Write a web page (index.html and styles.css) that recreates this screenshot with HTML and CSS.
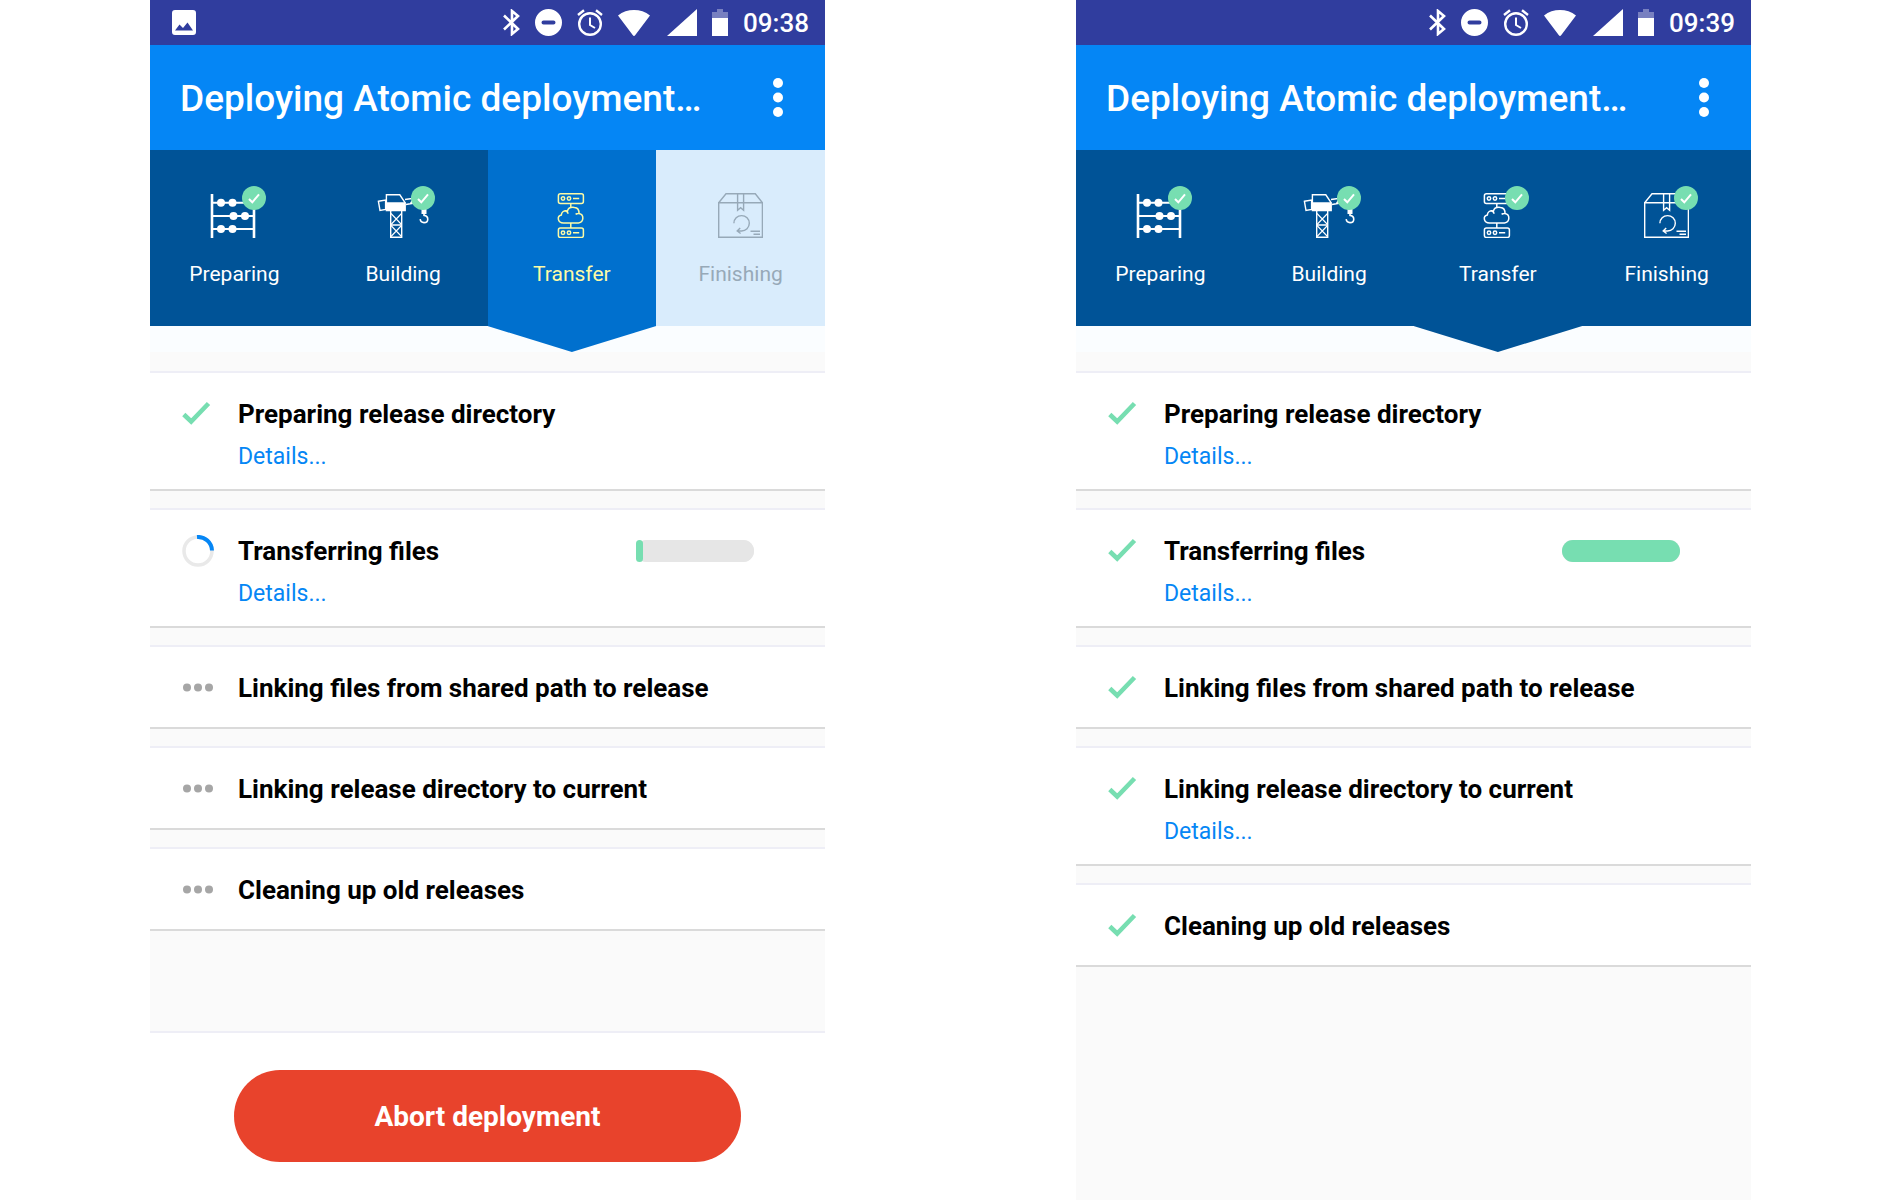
FILE: index.html
```html
<!DOCTYPE html>
<html lang="en">
<head>
  <meta charset="UTF-8">
  <meta name="viewport" content="width=device-width, initial-scale=1.0">
  <title>Deploying Atomic deployment</title>
  <link rel="stylesheet" href="styles.css">
</head>
<body>
  <!-- Shared icons -->
  <svg class="sprite" aria-hidden="true">
    <symbol id="i-image" viewBox="0 0 24 25">
      <path fill="currentColor" fill-rule="evenodd" d="M3 0h18a3 3 0 0 1 3 3v19a3 3 0 0 1-3 3H3a3 3 0 0 1-3-3V3a3 3 0 0 1 3-3zM3 20.500h18l-5.500-8-4.500 5.500-3.500-3.500z"/>
    </symbol>
    <symbol id="i-bluetooth" viewBox="0 0 17 27">
      <path fill="none" stroke="currentColor" stroke-width="2.600" d="M1 6.500l14 13.500-6 5v-23l6 5L1 20.500"/>
    </symbol>
    <symbol id="i-dnd" viewBox="0 0 27 27">
      <path fill="currentColor" fill-rule="evenodd" d="M13.500 0a13.500 13.500 0 1 0 0 27a13.500 13.500 0 1 0 0-27zM8.500 11.500h10a2 2 0 0 1 0 4h-10a2 2 0 0 1 0-4z"/>
    </symbol>
    <symbol id="i-alarm" viewBox="0 0 26 27">
      <g fill="none" stroke="currentColor" stroke-width="2.400">
        <circle cx="13" cy="15" r="10.800"/>
        <path d="M1 6l6-4.800M25 6l-6-4.800"/>
        <path stroke-width="2" d="M13 8.500v7.500l5 3"/>
      </g>
    </symbol>
    <symbol id="i-wifi" viewBox="0 0 34 26">
      <path fill="currentColor" d="M0 5.500C9-1.800 23-1.800 32 5.500L17.300 25a1.600 1.600 0 0 1-2.600 0z"/>
    </symbol>
    <symbol id="i-signal" viewBox="0 0 30 27">
      <path fill="currentColor" d="M30 0v27H0z"/>
    </symbol>
    <symbol id="i-battery" viewBox="0 0 16 27">
      <path fill="currentColor" opacity=".35" d="M5 0h6v3h5v6H0V3h5z"/>
      <path fill="currentColor" d="M0 9h16v18H0z"/>
    </symbol>
    <symbol id="i-abacus" viewBox="1 0 45 45" overflow="visible">
      <path fill="none" stroke="currentColor" stroke-width="2" d="M1 9.700h42M1 23h42M1 36h42"/>
      <path fill="none" stroke="currentColor" stroke-width="2.600" d="M1 1v44M43 1v44"/>
      <g fill="currentColor">
        <circle cx="10" cy="9.700" r="4"/><circle cx="21.500" cy="9.700" r="4"/>
        <circle cx="22.500" cy="23" r="4"/><circle cx="34" cy="23" r="4"/>
        <circle cx="10" cy="36" r="4"/><circle cx="21.500" cy="36" r="4"/>
      </g>
    </symbol>
    <symbol id="i-crane" viewBox="0 0 45 45" overflow="visible">
      <g fill="none" stroke="currentColor" stroke-width="1.400">
        <path d="M-2.600 8.200L4.600 7v9.500l-5.600 1zM24 6.500L42 4M25 11.500L42 8.500M29.500 10.500l3-5"/>
        <path d="M5.400 10V1.800h13.400l5.400 8"/>
        <path d="M9.700 18v26.300h11V18M9.700 32h11"/>
        <path stroke-width="1.100" d="M10 20.500l10.500 11M20.500 20.500L10 31.500M10 32.500l10.500 11M20.500 32.500L10 43.500"/>
        <path stroke-width="1.600" d="M43 20v2.400c5 .6 5 7.200 0 7.200a3.800 3.800 0 0 1-3.800-3.400"/>
      </g>
      <path fill="currentColor" d="M4.700 9.300h20.200v9H4.700zM40.500 16h5v5h-5z"/>
    </symbol>
    <symbol id="i-transfer" viewBox="0 0 45 45">
      <g fill="none" stroke="currentColor" stroke-width="1.500">
        <rect x="9.400" y=".8" width="25" height="9.600" rx="2"/>
        <rect x="9.400" y="35" width="25" height="9.400" rx="2"/>
        <circle cx="14" cy="5.500" r="1.700"/><circle cx="20" cy="5.500" r="1.700"/>
        <circle cx="14" cy="39.700" r="1.700"/><circle cx="20" cy="39.700" r="1.700"/>
        <path d="M24 5.500h6.200M24 39.700h6.200M21.800 10.400v4.200M21.800 30v5"/>
        <path d="M14.500 30h15c5.600-.6 5.800-8.700.5-9.600.1-3-1.200-5.800-4.500-6-4-.5-6.500 1-7 3.500-3.500-.8-6 1-6.200 4.200-4.500 1-4 7.500 2.200 7.900zM15.800 17.800c2 .1 3.100 1.200 3.200 3M30 20.400c-1.500-.1-2.600.2-3.400 1"/>
      </g>
    </symbol>
    <symbol id="i-box" viewBox="0 0 45 45">
      <g fill="none" stroke="currentColor" stroke-width="1.400">
        <path d="M.7 9.700v34.600h43.700V9.700zL8 .7h29.300l7.100 9"/>
        <path d="M19.600.7v16.600l3-2.600 3 2.600V.7"/>
        <path d="M15.900 30.300a7.700 7.700 0 1 1 7.700 7.700h-4M22.200 35l-3 3 3.400 2.500M32.500 38.300h9.500M35.500 41.300h6.500"/>
      </g>
    </symbol>
    <symbol id="i-badge" viewBox="0 0 24 24">
      <circle cx="12" cy="12" r="12" fill="#77deb1"/>
      <path fill="none" stroke="#fff" stroke-width="2" d="M7 13l3.300 3.300L17 8.300"/>
    </symbol>
    <symbol id="i-check" viewBox="0 0 32 32">
      <path fill="none" stroke="currentColor" stroke-width="4.600" d="M1.800 16.500l7.400 7L26.500 5.500"/>
    </symbol>
    <symbol id="i-spinner" viewBox="0 0 32 32">
      <circle cx="16" cy="16" r="14" fill="none" stroke="#e9e9e9" stroke-width="3.500"/>
      <path fill="none" stroke="#0586f5" stroke-width="4" d="M15 2A14 14 0 0 1 30 15.500"/>
    </symbol>
    <symbol id="i-dots" viewBox="0 0 32 32">
      <g fill="currentColor"><circle cx="5" cy="15.500" r="4"/><circle cx="16" cy="15.500" r="4"/><circle cx="27" cy="15.500" r="4"/></g>
    </symbol>
    <symbol id="i-more" viewBox="0 0 40 40">
      <g fill="currentColor"><circle cx="20" cy="5" r="5"/><circle cx="20" cy="19.500" r="5"/><circle cx="20" cy="34" r="5"/></g>
    </symbol>
  </svg>

  <main class="screens">
    <!-- Deployment in progress -->
    <section class="screen">
      <div class="status-bar">
        <svg class="s-image"><use href="#i-image"/></svg>
        <div class="status-icons">
          <svg class="s-bluetooth"><use href="#i-bluetooth"/></svg>
          <svg class="s-dnd"><use href="#i-dnd"/></svg>
          <svg class="s-alarm"><use href="#i-alarm"/></svg>
          <svg class="s-wifi"><use href="#i-wifi"/></svg>
          <svg class="s-signal"><use href="#i-signal"/></svg>
          <svg class="s-battery"><use href="#i-battery"/></svg>
          <span class="clock">09:38</span>
        </div>
      </div>
      <header class="app-bar">
        <h1>Deploying Atomic deployment…</h1>
        <button class="menu-button" type="button" aria-label="More options"><svg><use href="#i-more"/></svg></button>
      </header>
      <ol class="steps">
        <li class="step done">
          <div class="step-icon"><svg><use href="#i-abacus"/></svg><svg class="badge"><use href="#i-badge"/></svg></div>
          <span>Preparing</span>
        </li>
        <li class="step done">
          <div class="step-icon"><svg><use href="#i-crane"/></svg><svg class="badge"><use href="#i-badge"/></svg></div>
          <span>Building</span>
        </li>
        <li class="step active current">
          <div class="step-icon"><svg><use href="#i-transfer"/></svg></div>
          <span>Transfer</span>
        </li>
        <li class="step pending">
          <div class="step-icon"><svg><use href="#i-box"/></svg></div>
          <span>Finishing</span>
        </li>
      </ol>
      <ul class="tasks">
        <li class="task">
          <svg class="task-icon check"><use href="#i-check"/></svg>
          <h2>Preparing release directory</h2>
          <a class="details" href="#">Details...</a>
        </li>
        <li class="task">
          <svg class="task-icon"><use href="#i-spinner"/></svg>
          <h2>Transferring files</h2>
          <progress value="6" max="100" aria-label="Transferring files"></progress>
          <a class="details" href="#">Details...</a>
        </li>
        <li class="task">
          <svg class="task-icon dots"><use href="#i-dots"/></svg>
          <h2>Linking files from shared path to release</h2>
        </li>
        <li class="task">
          <svg class="task-icon dots"><use href="#i-dots"/></svg>
          <h2>Linking release directory to current</h2>
        </li>
        <li class="task">
          <svg class="task-icon dots"><use href="#i-dots"/></svg>
          <h2>Cleaning up old releases</h2>
        </li>
      </ul>
      <footer class="actions">
        <button class="abort-button" type="button">Abort deployment</button>
      </footer>
    </section>

    <!-- Deployment finished -->
    <section class="screen">
      <div class="status-bar">
        <div class="status-icons">
          <svg class="s-bluetooth"><use href="#i-bluetooth"/></svg>
          <svg class="s-dnd"><use href="#i-dnd"/></svg>
          <svg class="s-alarm"><use href="#i-alarm"/></svg>
          <svg class="s-wifi"><use href="#i-wifi"/></svg>
          <svg class="s-signal"><use href="#i-signal"/></svg>
          <svg class="s-battery"><use href="#i-battery"/></svg>
          <span class="clock">09:39</span>
        </div>
      </div>
      <header class="app-bar">
        <h1>Deploying Atomic deployment…</h1>
        <button class="menu-button" type="button" aria-label="More options"><svg><use href="#i-more"/></svg></button>
      </header>
      <ol class="steps">
        <li class="step done">
          <div class="step-icon"><svg><use href="#i-abacus"/></svg><svg class="badge"><use href="#i-badge"/></svg></div>
          <span>Preparing</span>
        </li>
        <li class="step done">
          <div class="step-icon"><svg><use href="#i-crane"/></svg><svg class="badge"><use href="#i-badge"/></svg></div>
          <span>Building</span>
        </li>
        <li class="step done current">
          <div class="step-icon"><svg><use href="#i-transfer"/></svg><svg class="badge"><use href="#i-badge"/></svg></div>
          <span>Transfer</span>
        </li>
        <li class="step done">
          <div class="step-icon"><svg><use href="#i-box"/></svg><svg class="badge"><use href="#i-badge"/></svg></div>
          <span>Finishing</span>
        </li>
      </ol>
      <ul class="tasks">
        <li class="task">
          <svg class="task-icon check"><use href="#i-check"/></svg>
          <h2>Preparing release directory</h2>
          <a class="details" href="#">Details...</a>
        </li>
        <li class="task">
          <svg class="task-icon check"><use href="#i-check"/></svg>
          <h2>Transferring files</h2>
          <progress value="100" max="100" aria-label="Transferring files"></progress>
          <a class="details" href="#">Details...</a>
        </li>
        <li class="task">
          <svg class="task-icon check"><use href="#i-check"/></svg>
          <h2>Linking files from shared path to release</h2>
        </li>
        <li class="task">
          <svg class="task-icon check"><use href="#i-check"/></svg>
          <h2>Linking release directory to current</h2>
          <a class="details" href="#">Details...</a>
        </li>
        <li class="task">
          <svg class="task-icon check"><use href="#i-check"/></svg>
          <h2>Cleaning up old releases</h2>
        </li>
      </ul>
    </section>
  </main>
</body>
</html>
```
FILE: styles.css
```css
* {
  box-sizing: border-box;
}
body {
  margin: 0;
  background: #fff;
  font-family: Roboto, sans-serif;
  color: #000;
}
h1, h2, ol, ul {
  margin: 0;
  padding: 0;
  list-style: none;
}
svg {
  display: block;
}
.sprite {
  position: absolute;
  width: 0;
  height: 0;
}
.screens {
  display: grid;
  grid-template-columns: 1fr 1fr;
  gap: 251px;
  min-height: 100vh;
  padding: 0 149px 0 150px;
}
.screen {
  display: flex;
  flex-direction: column;
  background: #fafafa;
}

/* status bar */
.status-bar {
  display: flex;
  align-items: center;
  height: 45px;
  padding: 0 16px 0 22px;
  background: #303d9e;
  color: #fff;
}
.status-icons {
  display: flex;
  align-items: center;
  gap: 15px;
  margin-left: auto;
}
.s-image { width: 24px; height: 25px; }
.s-bluetooth { width: 17px; height: 27px; }
.s-dnd { width: 27px; height: 27px; }
.s-alarm { width: 26px; height: 27px; }
.s-wifi { width: 34px; height: 26px; }
.s-signal { width: 30px; height: 27px; }
.s-battery { width: 16px; height: 27px; }
.clock {
  font-size: 26px;
  font-weight: 500;
  line-height: 32px;
}

/* app bar */
.app-bar {
  display: flex;
  align-items: center;
  justify-content: space-between;
  height: 105px;
  padding: 0 27px 0 30px;
  background: #0586f5;
  color: #fff;
}
.app-bar h1 {
  padding-top: 2px;
  font-size: 37px;
  font-weight: 500;
  line-height: 48px;
}
.menu-button {
  padding: 0;
  border: none;
  background: none;
  color: #fff;
  cursor: pointer;
}
.menu-button svg {
  width: 40px;
  height: 40px;
}

/* steps */
.steps {
  display: grid;
  grid-template-columns: repeat(4, 1fr);
  border-bottom: 26px solid #fafdff;
}
.step {
  --fill: #005397;
  position: relative;
  display: flex;
  flex-direction: column;
  align-items: center;
  gap: 24px;
  height: 176px;
  padding-top: 43px;
  background: var(--fill);
  color: #fff;
  font-size: 21px;
  line-height: 24px;
}
.step.active {
  --fill: #0070ce;
  color: #fdfba6;
}
.step.pending {
  --fill: #d9ecfc;
  color: #97a9b8;
}
.step.current::after {
  content: "";
  position: absolute;
  top: 100%;
  left: 0;
  width: 100%;
  height: 26px;
  background: var(--fill);
  clip-path: polygon(0 0, 100% 0, 50% 100%);
}
.step-icon {
  position: relative;
}
.step-icon svg {
  width: 45px;
  height: 45px;
  overflow: visible;
}
.step-icon .badge {
  position: absolute;
  top: -7px;
  left: 30px;
  width: 24px;
  height: 24px;
}

/* tasks */
.tasks {
  flex: 1;
  display: flex;
  flex-direction: column;
  gap: 17px;
  padding-top: 19px;
}
.task {
  display: grid;
  grid-template-columns: 32px 1fr auto;
  column-gap: 24px;
  align-items: center;
  padding: 25px 71px 23px 32px;
  border-top: 2px solid #eeeef6;
  border-bottom: 2px solid #dadada;
  background: #fff;
}
.task-icon {
  width: 32px;
  height: 32px;
}
.check {
  color: #77deb1;
}
.dots {
  color: #a6a6a6;
}
.task h2 {
  font-size: 26px;
  font-weight: 700;
  line-height: 32px;
}
.details {
  grid-column: 2;
  justify-self: start;
  margin-top: 18px;
  color: #0586f5;
  font-size: 23px;
  line-height: 18px;
  text-decoration: none;
}
progress {
  width: 118px;
  height: 22px;
  border: none;
  border-radius: 11px;
  background: #e6e6e6;
  appearance: none;
}
progress::-webkit-progress-bar {
  border-radius: 11px;
  background: #e6e6e6;
}
progress::-webkit-progress-value {
  border-radius: 11px;
  background: #77deb1;
}

/* actions */
.actions {
  padding: 37px 0 38px;
  border-top: 2px solid #eeeef6;
  background: #fff;
  text-align: center;
}
.abort-button {
  display: block;
  width: 75%;
  height: 92px;
  margin: 0 auto;
  border: none;
  border-radius: 46px;
  background: #e8432c;
  color: #fff;
  font-family: inherit;
  font-size: 28px;
  font-weight: 700;
  cursor: pointer;
}
```
